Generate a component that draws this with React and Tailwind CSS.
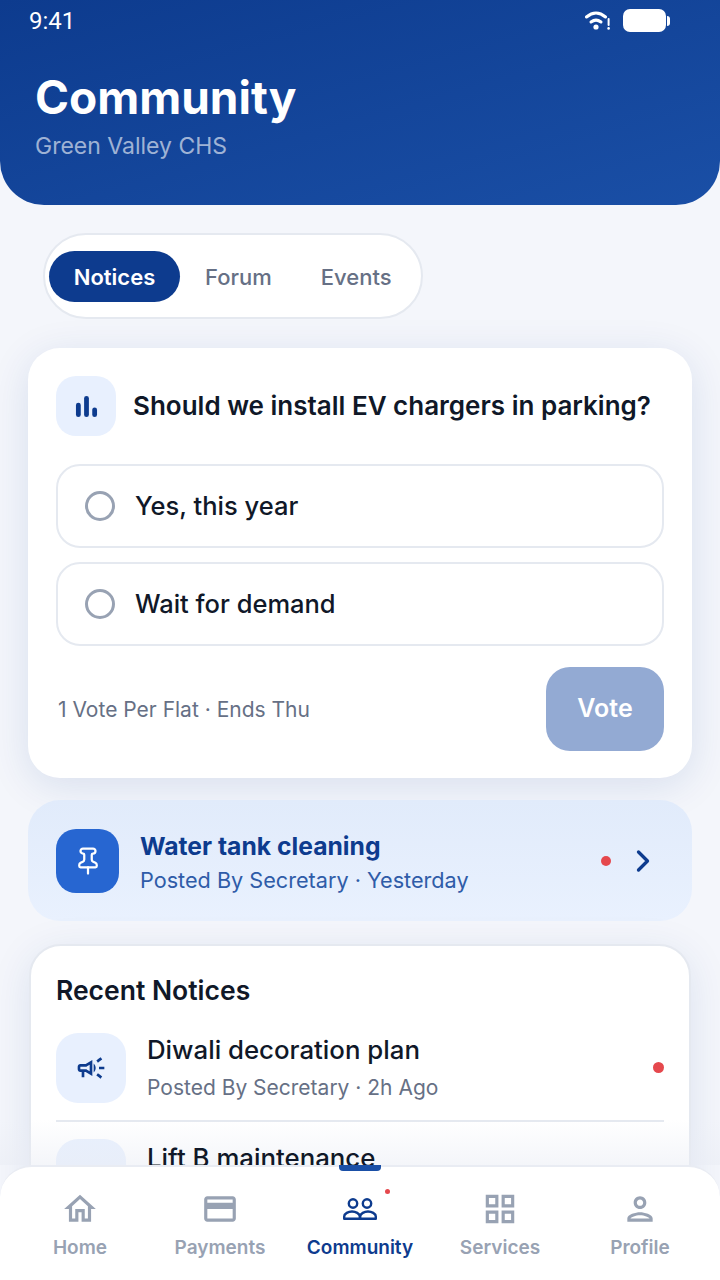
import { ChevronRight, Pin } from "lucide-react";
import {
  MdOutlineCampaign,
  MdOutlineCreditCard,
  MdOutlineGridView,
  MdOutlineHome,
  MdOutlinePerson,
} from "react-icons/md";

function PeopleIcon({ size, color }) {
  return (
    <svg width={size} height={size} viewBox="-2 -8 38 38" fill="none" stroke={color} strokeWidth="2.4" strokeLinejoin="round">
      <circle cx="10" cy="5.5" r="4.2" />
      <circle cx="24" cy="5.5" r="4.2" />
      <path d="M1.2 20.8V18.5C1.2 15.5 5.5 13.5 9 13.5C12.5 13.5 16.8 15.5 16.8 18.5V20.8Z" />
      <path d="M17.2 20.8V18.5C17.2 15.5 21.5 13.5 25 13.5C28.5 13.5 32.8 15.5 32.8 18.5V20.8Z" />
    </svg>
  );
}

const navItems = [
  { label: "Home", Icon: MdOutlineHome },
  { label: "Payments", Icon: MdOutlineCreditCard },
  { label: "Community", Icon: PeopleIcon, active: true },
  { label: "Services", Icon: MdOutlineGridView },
  { label: "Profile", Icon: MdOutlinePerson },
];

function StatusBar() {
  return (
    <div className="flex items-center justify-between pl-[29px] pr-[50px] h-[41px] text-white">
      <span className="font-['Roboto',sans-serif] text-[24px] leading-none">9:41</span>
      <div className="flex items-center gap-[13px]">
        <svg width="25" height="19" viewBox="0 0 25 19" fill="none" stroke="white" strokeLinecap="round" strokeWidth="3">
          <path d="M1.5 6C7.5 0.8 14.5 0.8 20.5 6" />
          <path d="M6 11c3.5-2.6 6.5-2.6 10 0" />
          <circle cx="11" cy="16" r="2.6" fill="white" stroke="none" />
          <path d="M23.6 8v6" strokeWidth="2" />
          <circle cx="23.6" cy="17.4" r="1.3" fill="white" stroke="none" />
        </svg>
        <div className="flex items-center gap-[1px]">
          <div className="w-[43px] h-[23px] rounded-[7px] bg-white" />
          <div className="w-[3px] h-[10px] rounded-r-full bg-white" />
        </div>
      </div>
    </div>
  );
}

function PollOption({ label }) {
  return (
    <div className="flex items-center h-[84px] rounded-[24px] border-2 border-[#e5e9f0] bg-white pl-[27px]">
      <div className="w-[30px] h-[30px] rounded-full border-[3px] border-[#98a2b3]" />
      <span className="ml-[20px] text-[25.5px] font-medium text-[#101828]">{label}</span>
    </div>
  );
}

function App() {
  return (
    <div className="relative w-[720px] h-[1280px] overflow-hidden bg-[#f4f6fb] font-['Inter',sans-serif]">
      <div className="h-[205px] rounded-b-[44px] bg-gradient-to-br from-[#0d3b8e] to-[#1a4fa6]">
        <StatusBar />
        <div className="pl-[35px] pt-[26px]">
          <h1 className="text-[46px] leading-[60px] font-bold text-white">Community</h1>
          <p className="mt-[3px] text-[23px] leading-[32px] text-white/60">Green Valley CHS</p>
        </div>
      </div>

      <div className="px-[28px]">
        <div className="mt-[28px] ml-[15px] w-[380px] h-[86px] rounded-full border-2 border-[#e5e9f0] bg-white flex items-center pl-[4px]">
          <div className="w-[131px] h-[51px] rounded-[26px] bg-[#0d3b8e] flex items-center justify-center pt-[2px] text-[22px] font-semibold text-white">
            Notices
          </div>
          <span className="ml-[25px] pt-[2px] text-[22px] font-medium text-[#667085]">Forum</span>
          <span className="ml-[49px] pt-[2px] text-[22px] font-medium text-[#667085]">Events</span>
        </div>

        <div className="mt-[29px] h-[430px] rounded-[32px] bg-white shadow-[0_8px_40px_rgba(13,59,142,0.12)] px-[28px] pt-[28px]">
          <div className="flex items-center gap-[17px] h-[60px]">
            <div className="w-[60px] h-[60px] shrink-0 rounded-[20px] bg-[#e8f0fe] flex items-center justify-center">
              <svg width="23" height="23" viewBox="0 0 24 24" fill="#0d3b8e">
                <rect x="1" y="8" width="5" height="15" rx="2.5" />
                <rect x="9.5" y="1" width="5" height="22" rx="2.5" />
                <rect x="18" y="13" width="5" height="10" rx="2.5" />
              </svg>
            </div>
            <h2 className="pb-[2px] text-[26px] font-semibold text-[#101828] whitespace-nowrap">
              Should we install EV chargers in parking?
            </h2>
          </div>
          <div className="mt-[28px] flex flex-col gap-[14px]">
            <PollOption label="Yes, this year" />
            <PollOption label="Wait for demand" />
          </div>
          <div className="mt-[21px] flex items-center justify-between">
            <span className="pl-[2px] pt-[2px] text-[21px] text-[#667085]">1 Vote Per Flat · Ends Thu</span>
            <div className="w-[118px] h-[84px] rounded-[24px] bg-[#93aad3] flex items-center justify-center text-[25px] font-semibold text-white">
              Vote
            </div>
          </div>
        </div>

        <div className="mt-[22px] h-[121px] rounded-[32px] bg-gradient-to-b from-[#e1ebfb] to-[#e9f1fe] flex items-center pl-[28px] pr-[31px]">
          <div className="w-[63px] h-[64px] shrink-0 rounded-[20px] bg-[#2766d1] flex items-center justify-center">
            <Pin size={30} color="white" strokeWidth={1.8} />
          </div>
          <div className="ml-[21px] pt-[3px] flex-1">
            <div className="text-[24.7px] leading-[34px] font-bold text-[#0d3b8e]">Water tank cleaning</div>
            <div className="mt-[1px] text-[21.65px] leading-[32px] text-[#2f5ca8]">Posted By Secretary · Yesterday</div>
          </div>
          <div className="w-[10px] h-[10px] rounded-full bg-[#e5484d]" />
          <ChevronRight className="ml-[14px]" size={36} color="#0d3b8e" strokeWidth={2.2} />
        </div>

        <div className="mt-[23px] mx-[1px] rounded-[32px] border-2 border-[#e5e9f0] bg-white px-[25px] pt-[26px] pb-[20px] shadow-[0_8px_40px_rgba(13,59,142,0.10)]">
          <h3 className="text-[26.5px] leading-[36px] font-semibold text-[#101828]">Recent Notices</h3>
          <div className="mt-[25px] flex items-start border-b-2 border-[#e5e9f0] pb-[17px]">
            <div className="w-[70px] h-[70px] shrink-0 rounded-[22px] bg-[#e8f0fe] flex items-center justify-center">
              <MdOutlineCampaign size={32} color="#0d3b8e" />
            </div>
            <div className="ml-[21px] h-[70px] flex-1">
              <div className="text-[25.8px] leading-[34px] font-medium text-[#101828]">Diwali decoration plan</div>
              <div className="mt-[4px] text-[21px] leading-[34px] text-[#667085]">Posted By Secretary · 2h Ago</div>
            </div>
            <div className="mt-[29px] w-[11px] h-[11px] rounded-full bg-[#e5484d]" />
          </div>
          <div className="mt-[17px] flex items-start">
            <div className="w-[70px] h-[70px] shrink-0 rounded-[22px] bg-[#e8f0fe]" />
            <div className="relative z-10 ml-[21px] pt-[1px] flex-1">
              <div className="text-[25.8px] leading-[36px] font-medium text-[#101828]">Lift B maintenance</div>
            </div>
          </div>
        </div>
      </div>

      {/* fade under the nav, the Lift B title stays above it */}
      <div className="absolute left-0 right-0 bottom-[115px] h-[45px] bg-gradient-to-b from-transparent to-[#e9ecf4]/50" />

      <nav className="absolute z-20 left-0 right-0 bottom-0 h-[115px] bg-white rounded-t-[32px] border-t-2 border-[#e9ecf3] grid grid-cols-5 px-[10px]">
        {navItems.map(({ label, Icon, active }) => (
          <div key={label} className="relative flex flex-col items-center pt-[23px]">
            {active && (
              <>
                <div className="absolute -top-[2px] w-[42px] h-[6px] rounded-b-[4px] bg-[#1a4fa6]" />
                <div className="absolute top-[22px] left-[95px] w-[5px] h-[5px] rounded-full bg-[#e5484d]" />
              </>
            )}
            <Icon size={38} color={active ? "#0d3b8e" : "#98a2b3"} />
            <span
              className={`mt-[8px] text-[19px] leading-[24px] font-semibold ${active ? "text-[#0d3b8e]" : "text-[#98a2b3]"}`}
            >
              {label}
            </span>
          </div>
        ))}
      </nav>
    </div>
  );
}

export default App;
